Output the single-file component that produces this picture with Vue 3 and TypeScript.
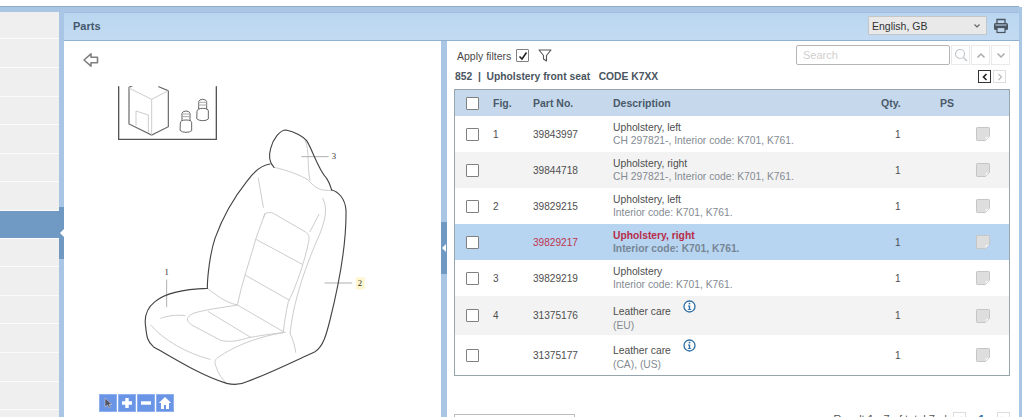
<script setup lang="ts">
interface Part {
  fig: string
  no: string
  name: string
  note: string
  info?: boolean
  selected?: boolean
  tall?: number
}
const parts: Part[] = [
  { fig: '1', no: '39843997', name: 'Upholstery, left', note: 'CH 297821-, Interior code: K701, K761.' },
  { fig: '', no: '39844718', name: 'Upholstery, right', note: 'CH 297821-, Interior code: K701, K761.' },
  { fig: '2', no: '39829215', name: 'Upholstery, left', note: 'Interior code: K701, K761.' },
  { fig: '', no: '39829217', name: 'Upholstery, right', note: 'Interior code: K701, K761.', selected: true },
  { fig: '3', no: '39829219', name: 'Upholstery', note: 'Interior code: K701, K761.' },
  { fig: '4', no: '31375176', name: 'Leather care', note: '(EU)', info: true, tall: 39 },
  { fig: '', no: '31375177', name: 'Leather care', note: '(CA), (US)', info: true, tall: 40 },
]
const sideRows = [27, 29, 29, 28, 29, 28, 29, 28, 28, 29, 28, 29, 29, 28, 28]
</script>

<template>
  <div class="page">
    <div class="topstrip"></div>
    <div class="main">
      <aside class="side">
        <div
          v-for="(h, i) in sideRows"
          :key="i"
          class="side-row"
          :class="{ active: i === 7 }"
          :style="{ height: h + 'px' }"
        ></div>
      </aside>
      <div class="split split-left"><span class="grip"><i class="tri"></i></span></div>
      <section class="panel">
        <header class="panel-head">
          <span class="panel-title">Parts</span>
          <div class="head-tools">
            <div class="lang">
              <span>English, GB</span>
              <svg width="8" height="6" viewBox="0 0 8 6"><path d="M1.5 1.5 4 4l2.5-2.5" fill="none" stroke="#666" stroke-width="1.2" /></svg>
            </div>
            <svg class="printer" width="16" height="16" viewBox="0 0 16 16">
              <path d="M4 5V1.5h8V5" fill="none" stroke="#4a5560" stroke-width="1.3" />
              <rect x="1" y="5" width="14" height="7" rx="1.5" fill="#4a5560" />
              <rect x="2.5" y="6.5" width="11" height="1" fill="#c0d8f0" />
              <rect x="4" y="9.5" width="8" height="5" fill="#c0d8f0" stroke="#4a5560" stroke-width="1.2" />
            </svg>
          </div>
        </header>
        <div class="panel-body">
          <div class="viewer">
            <svg class="back" width="16" height="14" viewBox="0 0 16 14">
              <path d="M1 7 8 .8v3.500h6.500v5.400H8v3.500z" fill="#fff" stroke="#808080" stroke-width="1.6" stroke-linejoin="round" />
            </svg>
            <svg class="drawing" width="270" height="300" viewBox="-90 -102 810 900" fill="none" stroke-linecap="round">
              <g transform="translate(-390 -360)">
                <path d="M356 260V418H649V260" stroke="#555" stroke-width="4" />
                <path d="M387 262V372L455 405 505 380V272L476 260M387 262 396 258" stroke="#666" stroke-width="3.5" />
                <path d="M387 264 455 298 505 272M455 298V405M408 376V333L445 345V395" stroke="#ccc" stroke-width="3" />
                <path d="M546 362V340Q548 333 558 333 568 333 570 340V362M541 368Q541 360 558 360 575 360 575 368V392Q570 397 558 397 546 397 541 392Z" stroke="#666" stroke-width="3" />
                <path d="M546 350H570M546 342H570" stroke="#aaa" stroke-width="3" />
                <path d="M596 327V305Q598 298 608 298 618 298 620 305V327M591 333Q591 325 608 325 625 325 625 333V357Q620 362 608 362 596 362 591 357Z" stroke="#666" stroke-width="3" />
                <path d="M596 315H620M596 307H620" stroke="#aaa" stroke-width="3" />
              </g>
              <g stroke="#cdcdcd" stroke-width="3">
                <path d="M432 142C470 150 510 165 535 180 555 205 575 215 605 210" />
                <path d="M525 60C540 90 530 140 540 180" />
                <path d="M385 175 400 262" />
                <path d="M400 295C405 275 415 275 430 280L525 335C540 345 538 355 535 370 525 420 495 510 475 545 468 575 463 610 460 635" />
                <path d="M405 280 378 355C360 420 335 490 322 555" />
                <path d="M378 358 515 432M345 465 477 540M567 283 540 335" />
                <path d="M578 235C595 265 585 300 570 340 530 430 490 540 480 640" />
                <path d="M232 505C260 525 280 545 322 555L460 635" />
                <path d="M322 555C280 562 220 570 190 580 170 590 165 600 185 615L270 660C300 670 330 660 362 652 400 645 440 640 465 637" />
                <path d="M235 575 362 652M92 595C110 588 140 583 165 587M62 615C100 660 170 700 240 718" />
                <path d="M465 637C380 650 310 680 265 712 250 720 255 730 260 745 265 760 275 778 290 790" />
                <path d="M480 640C490 660 495 680 497 697" />
                <path d="M110 480V560M585 489H665M515 110H595" stroke="#b0b0b0" />
              </g>
              <g stroke="#444" stroke-width="3.4">
                <path d="M432 142C420 130 415 110 422 85 430 55 450 30 468 30 495 35 520 50 530 62 550 95 565 150 590 175 600 190 603 205 605 210" />
                <path d="M420 132C395 135 375 150 350 185 310 235 275 300 255 355 240 400 232 470 232 505 170 507 110 515 75 545 50 565 42 590 47 620 50 650 52 665 70 680 130 715 220 770 290 790 310 795 330 795 350 785 420 760 500 720 555 695 580 680 590 640 600 600 625 500 650 380 648 270 645 235 625 215 605 210" />
              </g>
              <rect x="678" y="472" width="26" height="36" fill="#fdf6cf" />
              <g class="callout">
                <text x="110" y="464">1</text>
                <text x="690" y="498">2</text>
                <text x="612" y="116">3</text>
              </g>
            </svg>
            <div class="zoombar">
              <button class="zb">
                <svg width="10" height="12" viewBox="0 0 10 12"><path d="M2 1v9l2.5-2 1.5 3 1.5-.7L6 7.500h3z" fill="#556" stroke="#ccd" stroke-width=".6" /></svg>
              </button>
              <button class="zb">
                <svg width="12" height="12" viewBox="0 0 12 12"><path d="M4.300 1h3.400v3.300H11v3.400H7.700V11H4.300V7.700H1V4.300h3.300z" fill="#fff" /></svg>
              </button>
              <button class="zb">
                <svg width="12" height="12" viewBox="0 0 12 12"><rect x="1" y="4.300" width="10" height="3.400" fill="#fff" /></svg>
              </button>
              <button class="zb">
                <svg width="14" height="14" viewBox="0 0 14 14"><path d="M7 1 .8 7H3v6h3V9h2v4h3V7h2.200z" fill="#fff" /></svg>
              </button>
            </div>
          </div>
          <div class="split split-mid"><span class="grip"><i class="tri"></i></span></div>
          <div class="list">
            <div class="filters">
              <div class="apply">
                <span>Apply filters</span>
                <span class="box checked">
                  <svg width="10" height="10" viewBox="0 0 10 10"><path d="M1.500 5.500 4 8l4.500-6.500" fill="none" stroke="#222" stroke-width="1.600" /></svg>
                </span>
                <svg class="funnel" width="14" height="13" viewBox="0 0 14 13"><path d="M1 1h12L8.500 6.500V12L5.500 10V6.500z" fill="#fff" stroke="#555" stroke-width="1.100" stroke-linejoin="round" /></svg>
              </div>
              <div class="search">
                <div class="search-input">Search</div>
                <span class="sbtn">
                  <svg width="14" height="14" viewBox="0 0 14 14"><circle cx="6" cy="6" r="4.500" fill="none" stroke="#c4c8cc" stroke-width="1.200" /><path d="m9.500 9.500 3.500 3.500" stroke="#c4c8cc" stroke-width="1.500" /></svg>
                </span>
                <span class="sbtn">
                  <svg width="10" height="7" viewBox="0 0 10 7"><path d="M1.500 5.500 5 2l3.500 3.500" fill="none" stroke="#aaa" stroke-width="1.500" /></svg>
                </span>
                <span class="sbtn">
                  <svg width="10" height="7" viewBox="0 0 10 7"><path d="M1.500 1.500 5 5l3.500-3.500" fill="none" stroke="#aaa" stroke-width="1.500" /></svg>
                </span>
              </div>
            </div>
            <div class="crumb">
              <span>852&nbsp; |&nbsp; Upholstery front seat &nbsp;&nbsp;CODE K7XX</span>
              <div class="pager-mini">
                <span class="mini on"><svg width="6" height="8" viewBox="0 0 6 8"><path d="M4.500 1 1.500 4l3 3" fill="none" stroke="#222" stroke-width="1.600" /></svg></span>
                <span class="mini"><svg width="6" height="8" viewBox="0 0 6 8"><path d="m1.500 1 3 3-3 3" fill="none" stroke="#bbb" stroke-width="1.200" /></svg></span>
              </div>
            </div>
            <div class="table">
              <div class="row thead">
                <span class="cell"><span class="box"></span></span>
                <span>Fig.</span>
                <span>Part No.</span>
                <span>Description</span>
                <span>Qty.</span>
                <span>PS</span>
                <span></span>
              </div>
              <div
                v-for="(p, i) in parts"
                :key="p.no"
                class="row"
                :class="{ odd: i % 2 === 1, selected: p.selected, tall: p.tall }"
                :style="p.tall ? { height: p.tall + 'px' } : undefined"
              >
                <span class="cell"><span class="box"></span></span>
                <span>{{ p.fig }}</span>
                <span class="no">{{ p.no }}</span>
                <div class="desc">
                  <div class="name">
                    {{ p.name }}
                    <svg v-if="p.info" class="info" width="13" height="13" viewBox="0 0 13 13">
                      <circle cx="6.500" cy="6.500" r="5.500" fill="#fff" stroke="#2d6da3" stroke-width="1.300" />
                      <rect x="5.700" y="2.800" width="1.600" height="1.600" fill="#2d6da3" />
                      <path d="M5 5.600h2.200v3.700H8.200v.8H4.800v-.8h1V6.400H5z" fill="#2d6da3" />
                    </svg>
                  </div>
                  <div class="note">{{ p.note }}</div>
                </div>
                <span class="qty">1</span>
                <span></span>
                <svg class="ps" width="14" height="14" viewBox="0 0 14 14">
                  <path d="M.5 1.200Q.5.500 1.200.500h11.600q.7 0 .7.700V9.500L9.500 13.500H1.200q-.7 0-.7-.7z" fill="#dedede" stroke="#c6c6c6" />
                  <path d="M12.800 9.800 9.800 10.400 9.600 12.900z" fill="#fff" />
                </svg>
              </div>
            </div>
            <div class="foot">
              <span class="foot-btn"></span>
              <div class="result">
                <span>Result 1 - 7 of total 7&nbsp;&nbsp;&nbsp;|</span>
                <span class="mini">&lt;</span>
                <span class="page-no">1</span>
                <span class="mini">&gt;</span>
              </div>
            </div>
          </div>
        </div>
      </section>
    </div>
  </div>
</template>

<style>
html,
body {
  margin: 0;
  background: #fff;
}
</style>

<style scoped>
.page {
  width: 1024px;
  height: 417px;
  overflow: hidden;
  background: #fff;
  font-family: 'Liberation Sans', Arial, sans-serif;
  font-size: 10px;
  color: #444;
}
.topstrip {
  height: 6px;
  width: 1019px;
  background: #fff;
  border-bottom: 1px solid #8eaccb;
}
.main {
  display: flex;
  width: 1022px;
  height: 410px;
  background: #a9c6e4;
  padding-top: 5px;
  box-sizing: border-box;
}
.side {
  width: 59px;
  flex: none;
  background: #fff;
}
.side-row {
  box-sizing: border-box;
  background: #efefef;
  border-bottom: 1px solid #fbfbfb;
}
.side-row.active {
  background: #7099c3;
}
.split {
  flex: none;
  display: flex;
  flex-direction: column;
  background: #a9c6e4;
}
.split-left {
  width: 5px;
  padding-top: 195px;
}
.split-mid {
  width: 6px;
  padding-top: 181px;
}
.grip {
  height: 52px;
  background: #6f98c2;
  display: flex;
  align-items: center;
  justify-content: center;
}
.tri {
  width: 0;
  height: 0;
  border-style: solid;
  border-width: 4px 4px 4px 0;
  border-color: transparent #fff transparent transparent;
}
.panel {
  flex: 1;
  min-width: 0;
  display: flex;
  flex-direction: column;
  border-right: 3px solid #a9c6e4;
}
.panel-head {
  height: 29px;
  flex: none;
  box-sizing: border-box;
  border-top: 1px solid #a0bedd;
  border-bottom: 1px solid #8fb0d1;
  background: linear-gradient(#bad6f0, #c3dbf2);
  display: flex;
  align-items: center;
  justify-content: space-between;
  padding: 0 10px 2px 9px;
}
.panel-title {
  font-size: 11px;
  font-weight: 700;
  color: #44586c;
}
.head-tools {
  display: flex;
  align-items: center;
  gap: 6px;
}
.lang {
  width: 119px;
  height: 19px;
  box-sizing: border-box;
  border: 1px solid #c3c7c9;
  background: #e9e9e9;
  display: flex;
  align-items: center;
  justify-content: space-between;
  padding: 0 5px 0 3px;
  font-size: 10.500px;
  color: #333;
}
.panel-body {
  flex: 1;
  min-height: 0;
  display: flex;
  background: #fff;
}
.viewer {
  width: 377px;
  flex: none;
  display: flex;
  flex-direction: column;
  align-items: flex-start;
}
.back {
  margin: 12px 0 0 19px;
}
.drawing {
  margin: 19px 0 0 36px;
  flex: none;
}
.callout text {
  font-family: 'Liberation Serif', serif;
  font-size: 26px;
  fill: #333;
  text-anchor: middle;
}
.zoombar {
  display: flex;
  gap: 1px;
  margin: 8px 0 0 35px;
}
.zb {
  width: 18px;
  height: 18px;
  padding: 0;
  border: 1px solid #8eb0ee;
  background: #6a95e6;
  display: flex;
  align-items: center;
  justify-content: center;
}
.list {
  flex: 1;
  min-width: 0;
  padding: 0 9px 0 7px;
  display: flex;
  flex-direction: column;
}
.filters {
  height: 20px;
  display: flex;
  justify-content: space-between;
  align-items: center;
  margin-top: 4px;
}
.apply {
  display: flex;
  align-items: center;
  gap: 5px;
  padding: 1px 0 0 3px;
  font-size: 10.500px;
  color: #4a4a4a;
}
.funnel {
  margin-left: 4px;
}
.box {
  display: inline-flex;
  width: 13px;
  height: 13px;
  box-sizing: border-box;
  border: 1px solid #808080;
  border-radius: 1px;
  background: #fff;
  align-items: center;
  justify-content: center;
}
.search {
  display: flex;
  align-items: center;
  gap: 1px;
}
.search-input {
  width: 154px;
  height: 20px;
  box-sizing: border-box;
  border: 1px solid #b5b5b5;
  border-radius: 2px;
  padding: 0 6px;
  line-height: 18px;
  color: #cfcfcf;
  font-size: 11px;
}
.sbtn {
  width: 19px;
  height: 20px;
  box-sizing: border-box;
  border: 1px solid #eaeaea;
  display: flex;
  align-items: center;
  justify-content: center;
}
.crumb {
  height: 14px;
  display: flex;
  justify-content: space-between;
  align-items: center;
  font-size: 10.300px;
  font-weight: 700;
  color: #4a5560;
  margin: 5px 0 6px;
  padding-left: 1px;
}
.pager-mini {
  display: flex;
  gap: 2px;
  margin-right: 4px;
}
.mini {
  width: 13px;
  height: 13px;
  box-sizing: border-box;
  border: 1px solid #ddd;
  display: inline-flex;
  align-items: center;
  justify-content: center;
  color: #aaa;
  font-size: 9px;
}
.mini.on {
  border-color: #333;
}
.table {
  border: 1px solid #96a4ae;
  flex: none;
}
.row {
  height: 36px;
  display: grid;
  grid-template-columns: 38px 40px 80px 268px 59px 36px 1fr;
  align-items: center;
  color: #4e4e4e;
}
.thead {
  height: 26px;
  background: #c6d9ec;
  font-weight: 700;
  color: #4a5a6a;
  font-size: 10.500px;
}
.odd {
  background: #f3f3f3;
}
.selected {
  background: #b7d4f0;
}
.selected .no {
  color: #bf3450;
}
.selected .name {
  color: #b72d4a;
  font-weight: 700;
}
.selected .note {
  color: #768696;
  font-weight: 700;
}
.cell {
  display: flex;
  padding-left: 11px;
}
.no {
  font-size: 10.100px;
}
.desc {
  line-height: 12px;
  font-size: 10.300px;
}
.tall .note {
  margin-top: 2px;
}
.info {
  margin-left: 9px;
  vertical-align: 2px;
}
.note {
  color: #858b92;
  margin-top: 1px;
}
.qty {
  padding-left: 14px;
}
.foot {
  margin-top: 38px;
  display: flex;
  justify-content: space-between;
  align-items: flex-start;
}
.foot-btn {
  width: 121px;
  height: 22px;
  box-sizing: border-box;
  border: 1px solid #bbb;
  background: #fff;
}
.result {
  display: flex;
  align-items: center;
  gap: 6px;
  font-size: 11px;
  color: #555;
  margin-top: -2px;
}
.page-no {
  color: #2d6da3;
  font-weight: 700;
  width: 19px;
  text-align: center;
}
</style>
